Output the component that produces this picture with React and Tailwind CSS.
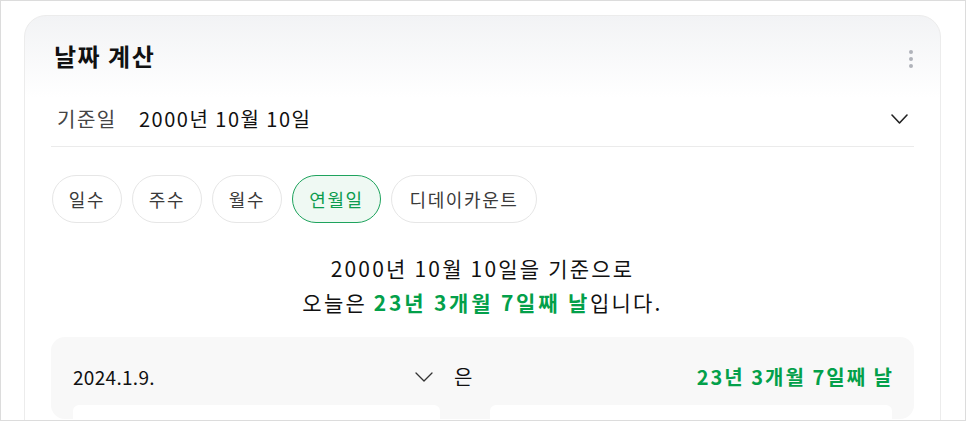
import React from "react";

function Chevron({ w = 17, h = 10, sw = 1.6, color = "#222" }) {
  return (
    <svg width={w} height={h} viewBox={`0 0 ${w} ${h}`} fill="none">
      <path
        d={`M1 1 L${w / 2} ${h - 1} L${w - 1} 1`}
        stroke={color}
        strokeWidth={sw}
        strokeLinecap="round"
        strokeLinejoin="round"
      />
    </svg>
  );
}

const tabs = [
  { t: "일수", w: "w-[70px]" },
  { t: "주수", w: "w-[70px]" },
  { t: "월수", w: "w-[70px]" },
  { t: "연월일", w: "w-[89px]", active: true },
  { t: "디데이카운트", w: "w-[146px]" },
];

export default function App() {
  return (
    <div className="w-[966px] h-[421px] border border-[#dcdcdc] bg-white overflow-hidden pt-[14px] pl-[23px] pr-[24px] font-['Noto_Sans_CJK_KR','Noto_Sans',sans-serif]">
      <div className="h-[420px] rounded-t-[22px] border border-[#ececec] bg-[linear-gradient(180deg,#f2f3f5_0px,#ffffff_82px)] px-[26px]">
        {/* header */}
        <div className="flex items-start justify-between pt-[22px] pb-[18px] pl-[3px]">
          <h1 className="text-[24px] leading-[36px] font-bold text-[#111] tracking-[1.5px]">날짜 계산</h1>
          <div className="flex flex-col gap-[3px] pt-[12px] pr-[1px]">
            <span className="w-[4px] h-[4px] rounded-full bg-[#b0b3ba]" />
            <span className="w-[4px] h-[4px] rounded-full bg-[#b0b3ba]" />
            <span className="w-[4px] h-[4px] rounded-full bg-[#b0b3ba]" />
          </div>
        </div>
        {/* base date row */}
        <div className="h-[55px] flex items-center justify-between border-b border-[#ebebeb] pl-[6px] pr-[6px]">
          <div className="flex items-center text-[20px] tracking-[1.5px]">
            <span className="text-[#444] w-[82px]">기준일</span>
            <span className="text-[#111]">2000년 10월 10일</span>
          </div>
          <Chevron />
        </div>
        {/* tabs */}
        <div className="flex gap-[10px] mt-[28px] pl-[1px]">
          {tabs.map(({ t, w, active }) => (
            <div
              key={t}
              className={
                active
                  ? `${w} h-[48px] flex items-center justify-center rounded-full border border-[#1ea35d] bg-[#eff9f3] text-[#0c9c4e] text-[18px] tracking-[1.6px]`
                  : `${w} h-[48px] flex items-center justify-center rounded-full border border-[#e6e6e6] bg-white text-[#3a3a3a] text-[18px] tracking-[1.6px]`
              }
            >
              {t}
            </div>
          ))}
        </div>
        {/* result text */}
        <div className="mt-[28px] text-center text-[21px] leading-[34px] text-[#111] tracking-[2.2px]">
          <div>2000년 10월 10일을 기준으로</div>
          <div>
            오늘은 <span className="font-bold text-[#03a04a] tracking-[2.8px]">23년 3개월 7일째 날</span>입니다.
          </div>
        </div>
        {/* bottom box */}
        <div className="mt-[18px] rounded-[14px] bg-[#f8f8f8] px-[22px] pt-[16px]">
          <div className="flex items-start">
            <div className="w-[367px]">
              <div className="h-[48px] flex items-center justify-between pr-[7px]">
                <span className="text-[19px] text-[#111] tracking-[0.3px]">2024.1.9.</span>
                <Chevron w={18} h={10} sw={1.3} color="#333" />
              </div>
              <div className="mt-[4px] h-[14px] bg-white rounded-t-[6px]" />
            </div>
            <div className="w-[50px] h-[48px] flex items-center pl-[14px] text-[20px] text-[#111]">은</div>
            <div className="flex-1">
              <div className="h-[48px] flex items-center justify-end -mr-[2px]">
                <span className="text-[20px] font-bold text-[#03a04a] tracking-[2px]">23년 3개월 7일째 날</span>
              </div>
              <div className="mt-[4px] h-[14px] bg-white rounded-t-[6px]" />
            </div>
          </div>
        </div>
      </div>
    </div>
  );
}
